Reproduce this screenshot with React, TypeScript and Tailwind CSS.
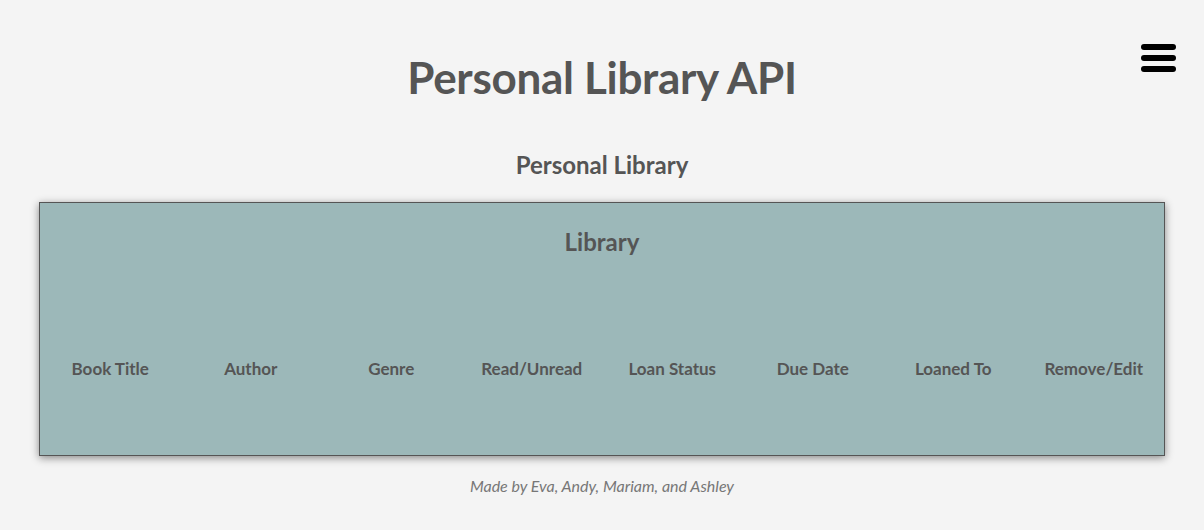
const columns = [
  "Book Title",
  "Author",
  "Genre",
  "Read/Unread",
  "Loan Status",
  "Due Date",
  "Loaned To",
  "Remove/Edit",
];

export default function App() {
  return (
    <div
      className="min-h-screen w-full bg-[#f4f4f4] text-[#555555] px-[39px]"
      style={{ fontFamily: "Lato, 'Open Sans', sans-serif" }}
    >
      {/* Header */}
      <header className="relative pt-[52px]">
        <h1 className="text-center text-[44px] font-bold leading-[50px] tracking-[-0.3px]">
          Personal Library API
        </h1>
        <button className="absolute right-[-11px] top-[44px] flex w-[35px] flex-col gap-[5px]">
          <span className="block h-[6px] w-full rounded-full bg-black" />
          <span className="block h-[6px] w-full rounded-full bg-black" />
          <span className="block h-[6px] w-full rounded-full bg-black" />
        </button>
      </header>

      <h2 className="mt-[49px] text-center text-[24px] font-bold leading-[28px]">
        Personal Library
      </h2>

      {/* Library table */}
      <section className="mt-[23px] h-[254px] border border-[#555555] bg-[#9cb8b9] shadow-[0_2px_8px_rgba(0,0,0,0.45)]">
        <h3 className="pt-[24px] text-center text-[24px] font-bold leading-[30px]">
          Library
        </h3>
        <div className="mt-[100px] grid grid-cols-8">
          {columns.map((c) => (
            <div key={c} className="text-center text-[17px] font-bold leading-[24px]">
              {c}
            </div>
          ))}
        </div>
      </section>

      <footer className="mt-[21px] text-center text-[16px] italic leading-[18px] text-[#777777]">
        Made by Eva, Andy, Mariam, and Ashley
      </footer>
    </div>
  );
}
